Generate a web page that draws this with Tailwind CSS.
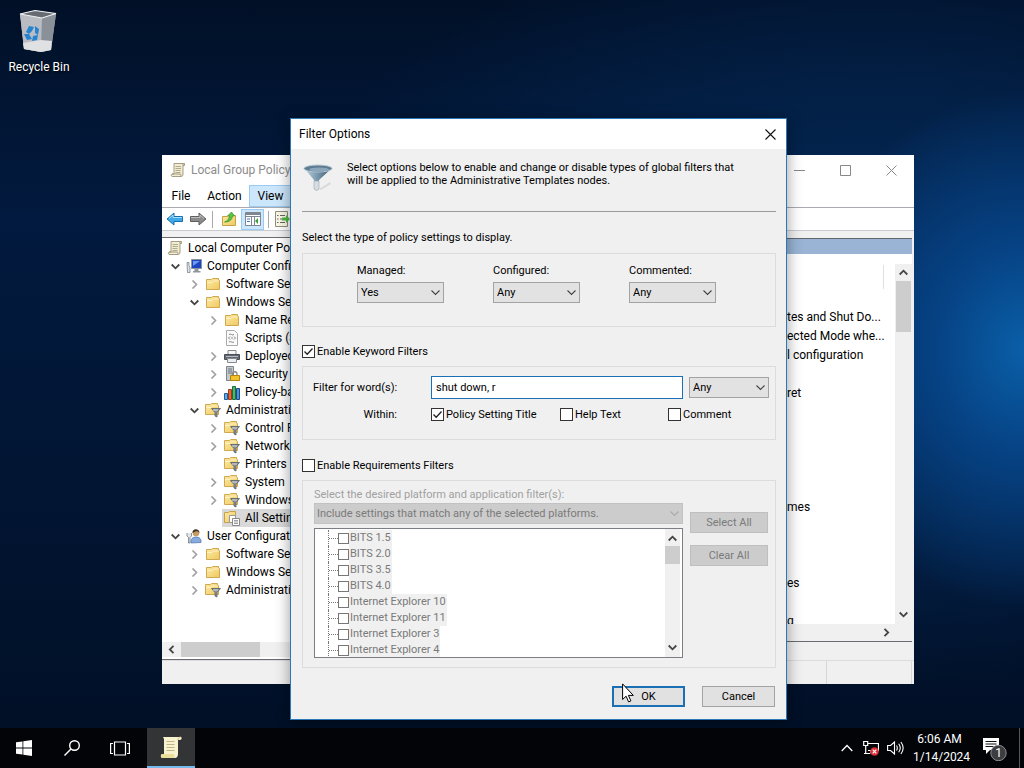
<!DOCTYPE html>
<html lang="en">
<head>
<meta charset="utf-8">
<meta name="viewport" content="width=device-width, initial-scale=1">
<title>Filter Options</title>
<script src="https://cdn.jsdelivr.net/npm/@tailwindcss/browser@4"></script>
</head>
<body class="h-screen overflow-hidden bg-[#011334] font-['Roboto',sans-serif] text-[12px] leading-[18px] text-black">

<!-- shared icons -->
<svg class="absolute size-0" aria-hidden="true">
  <linearGradient id="gold" x1="0" y1="0" x2="1" y2="1"><stop offset="0" stop-color="#fdeaa8"/><stop offset="1" stop-color="#efc95e"/></linearGradient>
  <linearGradient id="steel" x1="0" y1="0" x2="1" y2="0"><stop offset="0" stop-color="#c3d6e2"/><stop offset=".45" stop-color="#7b9bb0"/><stop offset="1" stop-color="#3d566b"/></linearGradient>
  <symbol id="right" viewBox="0 0 9 9"><path d="M2.500.5 6.500 4.500 2.500 8.500" fill="none" stroke="#a0a0a0" stroke-width="1.600"/></symbol>
  <symbol id="down" viewBox="0 0 9 9"><path d="M.7 2.500 4.500 6.300 8.300 2.500" fill="none" stroke="#444" stroke-width="1.800"/></symbol>
  <symbol id="folder" viewBox="0 0 16 16"><path d="M1.500 3.500h5l1-1h6v2h1v9h-13z" fill="url(#gold)" stroke="#d0a850"/><path d="M2 6.500h5l1.500-1.500h5.500" fill="none" stroke="#fff3c4"/></symbol>
  <symbol id="filterfolder" viewBox="0 0 16 16"><path d="M.5 2.500h5l1-1h6v2h1v9h-13z" fill="url(#gold)" stroke="#d0a850"/><path d="M1 5.500h5l1.500-1.500h5.500" fill="none" stroke="#fff3c4"/><path d="M6.500 6.500h9l-3.500 4v4.500l-2-1v-3.500z" fill="#8c959b" stroke="#555e64" stroke-width=".8"/><path d="M8 8h5" stroke="#d5dadd"/></symbol>
  <symbol id="scroll" viewBox="0 0 16 16"><path d="M4 1.500h10.500v2H13v8.500c0 1.500-.5 2.500-2 2.500H2c-1-.5-1-2 0-2.500h2z" fill="#f1ecd2" stroke="#9b9478" stroke-width=".9"/><path d="M13 3.500V1.500M2 12h8.500c.5 1 .5 2 0 2.500" fill="none" stroke="#9b9478" stroke-width=".9"/><path d="M5.500 4.500h5.500M5.500 6.500h5.500M5.500 8.500h5M5.500 10.500h5" stroke="#a9a384" stroke-width=".9"/></symbol>
  <symbol id="chev" viewBox="0 0 9 9"><path d="M.5 2.500 4.500 6.500 8.500 2.500" fill="none" stroke="currentColor" stroke-width="1.100"/></symbol>
  <symbol id="tick" viewBox="0 0 13 13"><path d="M2.500 6.500 5.200 9.300 10.500 3.500" fill="none" stroke="#222" stroke-width="1.300"/></symbol>
</svg>

<div class="relative flex h-full flex-col">

  <!-- wallpaper and desktop -->
  <main class="relative min-h-0 flex-1 overflow-hidden bg-[radial-gradient(ellipse_220px_260px_at_100%_48%,#0a5fa8_0%,#064284_40%,transparent_100%),radial-gradient(ellipse_620px_380px_at_85%_42%,#042c5e_0%,#032148_50%,transparent_100%),linear-gradient(180deg,#011027,#021a3f_30%,#011027)]">
    <div class="flex w-[78px] flex-col items-center gap-1 pt-2 text-white">
      <svg class="h-[46px] w-[42px]" viewBox="0 0 42 46" role="img" aria-label="Recycle Bin">
        <path d="M2 6 17 2.500 38 5.500 33 42 23 44 6 41z" fill="#aaafb5"/>
        <path d="M2 6 24 10 23 44 6 41z" fill="#b9bdc3"/>
        <path d="M24 10 38 5.500 33 42 23 44z" fill="#8a9098"/>
        <path d="M5 35 23 32 34 33 33 42 23 44 6 41z" fill="#dfe1e3"/>
        <path d="M2 6 17 2.500 38 5.500 24 10z" fill="#666b71" stroke="#eef0f1" stroke-width="1.200"/>
        <path d="M8 24l3-6 5 1-2 4-3 3zM17 18l4 3-1 6-3-2zM6 26l5 0 3 5-5 1zM15 28l5-1-1 5-5 1z" fill="#2583cf"/>
      </svg>
      <span class="[text-shadow:1px_1px_2px_#000]">Recycle Bin</span>
    </div>

    <!-- Local Group Policy Editor -->
    <section class="absolute top-[155px] left-[162px] flex h-[529px] w-[752px] flex-col bg-[#f0f0f0]" aria-label="Local Group Policy Editor">
      <header class="flex h-[30px] items-center bg-white pl-2 text-[#8c8c8c]">
        <svg class="mr-[5px] size-4"><use href="#scroll"/></svg>
        <h1 class="flex-1">Local Group Policy Editor</h1>
        <button class="grid h-full w-[46px] place-items-center" aria-label="Minimize"><svg class="size-[11px]" viewBox="0 0 11 11"><path d="M0 5.500h11" stroke="#888"/></svg></button>
        <button class="grid h-full w-[46px] place-items-center" aria-label="Maximize"><svg class="size-[11px]" viewBox="0 0 11 11"><path d="M.5.5h10v10H.5z" fill="none" stroke="#888"/></svg></button>
        <button class="grid h-full w-[46px] place-items-center" aria-label="Close"><svg class="size-[11px]" viewBox="0 0 11 11"><path d="m.5.5 10 10m0-10-10 10" stroke="#888"/></svg></button>
      </header>
      <nav class="flex h-[23px] items-stretch border-b border-[#a9abb0] bg-white">
        <button class="w-[38px]">File</button>
        <button class="w-[49px]">Action</button>
        <button class="w-[43px] border border-[#99cbf5] bg-[#cce6fb]">View</button>
        <button class="px-2">Help</button>
      </nav>
      <div class="flex h-[23px] shrink-0 items-center border-b border-[#c8cbd0] bg-white pl-1">
        <button aria-label="Back"><svg class="h-4 w-[18px]" viewBox="0 0 18 16"><path d="M1 8 8 2v3.500h8.500v5H8V14z" fill="#3fa9e8" stroke="#1c6fae"/><path d="M3 7.500 7 4v2.500h9" fill="none" stroke="#a9defc"/></svg></button>
        <button class="ml-[5px]" aria-label="Forward"><svg class="h-4 w-[18px]" viewBox="0 0 18 16"><path d="M17 8 10 2v3.500H1.500v5H10V14z" fill="#8b8b8b" stroke="#5f5f5f"/><path d="M2 6.500h9V4l4 3.500" fill="none" stroke="#bdbdbd"/></svg></button>
        <span class="ml-[5px] h-[17px] w-px bg-[#a9a9a9]"></span>
        <button class="ml-2" aria-label="Up"><svg class="size-4" viewBox="0 0 16 16"><path d="M1.500 5.500h5l1-1h7v10h-13z" fill="url(#gold)" stroke="#c9a04a"/><path d="M3.500 11c3-1 4.500-3 5-6H6.500L10.500 1l3 4h-2c-.5 4-3 6-8 6z" fill="#5cc244" stroke="#35942a" stroke-width=".7"/></svg></button>
        <button class="ml-1 grid h-[21px] w-[23px] place-items-center border border-[#99cbf5] bg-[#cce6fb]" aria-label="Show tree"><svg class="size-4" viewBox="0 0 16 16"><path d="M.5 1.500h15v13H.5z" fill="#fff" stroke="#7d8894"/><path d="M1 2h14v2H1z" fill="#7d8894"/><path d="M1 5.500h14M6.500 6v8.500M9.500 6v8" stroke="#7d8894"/><path d="M2 8h3M2 10.500h3" stroke="#4979b8"/><path d="M13 7v6L10 10z" fill="#3ba334"/></svg></button>
        <span class="ml-1 h-[17px] w-px bg-[#a9a9a9]"></span>
        <button class="ml-[5px]" aria-label="Export list"><svg class="size-4" viewBox="0 0 16 16"><path d="M1.500.5h12v15h-12z" fill="#fbf8e6" stroke="#8f8f7c"/><path d="M3 4.500h1.500M3 8h1.500M3 11.500h1.500M6 4.500h5M6 8h3M6 11.500h5" stroke="#666"/><path d="M8 6.500h4V4l4 4-4 4V9.500H8z" fill="#4fb944"/></svg></button>
      </div>

      <div class="flex min-h-0 flex-1 justify-between">
        <div class="mt-[6px] flex w-[300px] flex-col border-y border-[#696b70] bg-white pb-[2px]">
          <ul class="flex-1 overflow-hidden pt-[1px] whitespace-nowrap [&_b]:mr-[5px] [&_b]:size-4 [&_b]:shrink-0 [&_button]:mr-[2px] [&_button]:grid [&_button]:h-[18px] [&_button]:w-[17px] [&_button]:shrink-0 [&_button]:place-items-center [&_button_svg]:size-[9px] [&_div]:flex [&_div]:h-[18px] [&_div]:items-center">
            <li><div class="pl-[5px]"><b><svg class="size-4"><use href="#scroll"/></svg></b>Local Computer Policy</div>
              <ul class="pl-[5px]">
                <li><div><button aria-label="Collapse"><svg><use href="#down"/></svg></button><b><svg class="size-4" viewBox="0 0 16 16"><path d="M5.500 1.500h10v9h-10z" fill="#1c45c4" stroke="#8b939d"/><path d="M7 3h7L7 8z" fill="#6d9af0"/><path d="M8.500 11h4v2h2v1.500H7V13h1.500z" fill="#8f979f"/><path d="M1 4.500h2v3l1 2v5H1.500z" fill="#dbe2ea" stroke="#6c7681" stroke-width=".7"/></svg></b>Computer Configuration</div>
                  <ul class="pl-[19px]">
                    <li><div><button aria-label="Expand"><svg><use href="#right"/></svg></button><b><svg class="size-4"><use href="#folder"/></svg></b>Software Settings</div></li>
                    <li><div><button aria-label="Collapse"><svg><use href="#down"/></svg></button><b><svg class="size-4"><use href="#folder"/></svg></b>Windows Settings</div>
                      <ul class="pl-[19px]">
                        <li><div><button aria-label="Expand"><svg><use href="#right"/></svg></button><b><svg class="size-4"><use href="#folder"/></svg></b>Name Resolution Policy</div></li>
                        <li><div class="pl-[19px]"><b><svg class="size-4" viewBox="0 0 16 16"><path d="M2.500.5h8l3 3v12h-11z" fill="#fafafa" stroke="#aaa"/><path d="M5 4.500c2-1.500 3 1.500 5 0M4.500 8 6 6.500M4.500 8 6 9.500M11.500 8 10 6.500M11.500 8 10 9.500M7 8h2M5 12c2-1.500 3 1.500 5 0" fill="none" stroke="#777" stroke-width=".9"/></svg></b>Scripts (Startup/Shutdown)</div></li>
                        <li><div><button aria-label="Expand"><svg><use href="#right"/></svg></button><b><svg class="size-4" viewBox="0 0 16 16"><path d="M4 2.500h8v4H4z" fill="#f5f5f5" stroke="#888"/><path d="M.5 6.500h15v5H.5z" fill="#626870" stroke="#4a4e54"/><path d="M2 8.500h12" stroke="#b5bac0"/><path d="M3.500 10.500h9v4h-9z" fill="#e9eef2" stroke="#888"/></svg></b>Deployed Printers</div></li>
                        <li><div><button aria-label="Expand"><svg><use href="#right"/></svg></button><b><svg class="size-4" viewBox="0 0 16 16"><path d="M2.500.5h7v14h-7z" fill="#c3c9ce" stroke="#7d858c"/><path d="M4 3h4M4 5h4M4 7h4" stroke="#6c747b"/><path d="M8.500 10V8c0-3 4.500-3 4.500 0v2" fill="none" stroke="#8b8b8b" stroke-width="1.300"/><path d="M6.500 9.500h9v5h-9z" fill="#f2c12e" stroke="#b3870d"/></svg></b>Security Settings</div></li>
                        <li><div><button aria-label="Expand"><svg><use href="#right"/></svg></button><b><svg class="size-4" viewBox="0 0 16 16"><path d="M.5 9.500h3v6h-3z" fill="#69abea" stroke="#245d96"/><path d="M4.500 5.500h3v10h-3z" fill="#e8663a" stroke="#963b1b"/><path d="M8.500 2.500h3v13h-3z" fill="#53b36a" stroke="#1c6d38"/><path d="M12.500 4.500h3v11h-3z" fill="#4c8fdd" stroke="#1b4a85"/></svg></b>Policy-based QoS</div></li>
                      </ul>
                    </li>
                    <li><div><button aria-label="Collapse"><svg><use href="#down"/></svg></button><b><svg class="size-4"><use href="#filterfolder"/></svg></b>Administrative Templates</div>
                      <ul class="pl-[19px]">
                        <li><div><button aria-label="Expand"><svg><use href="#right"/></svg></button><b><svg class="size-4"><use href="#filterfolder"/></svg></b>Control Panel</div></li>
                        <li><div><button aria-label="Expand"><svg><use href="#right"/></svg></button><b><svg class="size-4"><use href="#filterfolder"/></svg></b>Network</div></li>
                        <li><div class="pl-[19px]"><b><svg class="size-4"><use href="#filterfolder"/></svg></b>Printers</div></li>
                        <li><div><button aria-label="Expand"><svg><use href="#right"/></svg></button><b><svg class="size-4"><use href="#filterfolder"/></svg></b>System</div></li>
                        <li><div><button aria-label="Expand"><svg><use href="#right"/></svg></button><b><svg class="size-4"><use href="#filterfolder"/></svg></b>Windows Components</div></li>
                        <li><div class="ml-[17px] bg-[#d9d9d9] pl-[2px]"><b><svg class="size-4" viewBox="0 0 16 16"><path d="M.5 2.500h4l1-1h6v11H.5z" fill="url(#gold)" stroke="#c9a04a"/><path d="M5.500 5.500h6v7h-6z" fill="#fff" stroke="#999"/><path d="M8.500 8.500h7v7h-7z" fill="#fff" stroke="#888"/><path d="M10 10.500h4M10 12h4M10 13.500h4" stroke="#777" stroke-width=".7"/></svg></b>All Settings</div></li>
                      </ul>
                    </li>
                  </ul>
                </li>
                <li><div><button aria-label="Collapse"><svg><use href="#down"/></svg></button><b><svg class="size-4" viewBox="0 0 16 16"><path d="M5 15c-.5-4 1.500-6 5-6s5.500 2 5 5.500z" fill="#87acdf" stroke="#4a6fa8" stroke-width=".7"/><circle cx="10" cy="5" r="3.300" fill="#c79b62"/><path d="M6.500 5c-.5-5 7-5 7 0-1-2-4-2.500-5-1z" fill="#3f3427"/><path d="M1 5v3l1.500 1.500V15H4V9.500L5.500 8V5" fill="#e3e8ed" stroke="#717a84" stroke-width=".8"/></svg></b>User Configuration</div>
                  <ul class="pl-[19px]">
                    <li><div><button aria-label="Expand"><svg><use href="#right"/></svg></button><b><svg class="size-4"><use href="#folder"/></svg></b>Software Settings</div></li>
                    <li><div><button aria-label="Expand"><svg><use href="#right"/></svg></button><b><svg class="size-4"><use href="#folder"/></svg></b>Windows Settings</div></li>
                    <li><div><button aria-label="Expand"><svg><use href="#right"/></svg></button><b><svg class="size-4"><use href="#filterfolder"/></svg></b>Administrative Templates</div></li>
                  </ul>
                </li>
              </ul>
            </li>
          </ul>
          <div class="flex h-[15px] items-center bg-[#f0f0f0]">
            <svg class="mx-[5px] size-[9px]" viewBox="0 0 9 9"><path d="M6.500.8 2.800 4.500 6.500 8.200" fill="none" stroke="#444" stroke-width="1.800"/></svg>
            <span class="h-full w-[79px] bg-[#cdcdcd]"></span>
          </div>
        </div>

        <div class="mt-[7px] mr-[2px] flex w-[430px] flex-col">
          <div class="h-4 border-t border-[#62676d] bg-[#99b4d4]"></div>
          <div class="flex min-h-0 flex-1 bg-white">
            <div class="flex min-w-0 flex-1 flex-col">
              <div class="mt-[11px] mr-[11px] h-6 border-r border-[#e0e0e0]"></div>
              <ul class="ml-[305px] flex-1 overflow-hidden pt-[19px] whitespace-nowrap [&>li]:h-[19px]">
                <li>tes and Shut Do...</li><li>ected Mode whe...</li><li>l configuration</li><li></li><li>ret</li><li></li><li></li><li></li><li></li><li></li><li>mes</li><li></li><li></li><li></li><li>es</li><li></li><li>g</li>
              </ul>
              <div class="flex h-[17px] items-center justify-end bg-[#f0f0f0] pr-1">
                <svg class="size-[9px]" viewBox="0 0 9 9"><path d="M2.500.8 6.200 4.500 2.500 8.200" fill="none" stroke="#444" stroke-width="1.800"/></svg>
              </div>
            </div>
            <div class="mt-[10px] flex w-[17px] flex-col items-center bg-[#f0f0f0] pb-[18px]">
              <svg class="my-1 size-[9px]" viewBox="0 0 9 9"><path d="M.7 6.500 4.500 2.700 8.300 6.500" fill="none" stroke="#444" stroke-width="1.800"/></svg>
              <span class="h-[51px] w-[15px] bg-[#cdcdcd]"></span>
              <svg class="mt-auto mb-1 size-[9px]"><use href="#down"/></svg>
            </div>
          </div>
          <div class="h-[19px] border-t border-[#696b70]"></div>
        </div>
      </div>
      <footer class="flex h-[24px] shrink-0 justify-end border-t border-[#dcdcdc] pr-[2px]"><span class="w-[86px] border-x border-[#d7d7d7]"></span></footer>
    </section>

    <!-- Filter Options -->
    <form class="absolute top-[118px] left-[290px] flex w-[497px] flex-col border border-[#2b78b8] bg-[#f0f0f0] pr-[10px] pb-3 pl-[11px] text-[11px] leading-[13px] shadow-[0_2px_14px_rgba(0,0,0,0.4)]" role="dialog" aria-label="Filter Options">
      <header class="-mr-[10px] -ml-[11px] flex h-[30px] items-center justify-between bg-white pl-2 text-[12px]">
        <h2>Filter Options</h2>
        <button type="button" class="grid h-full w-[31px] place-items-center" aria-label="Close"><svg class="size-[11px]" viewBox="0 0 11 11"><path d="m.5.5 10 10m0-10-10 10" stroke="#111" stroke-width="1.100"/></svg></button>
      </header>

      <div class="flex h-[63px] gap-[13px] border-b border-[#9a9a9a] pt-3">
        <svg class="mt-[2px] h-[30px] w-8" viewBox="0 0 32 30"><path d="M17 26l11-7 1 2-10 6z" fill="#dadada"/><path d="M2 5 12 17v8c0 3 5 3 5 0v-8L30 5z" fill="url(#steel)"/><path d="M12 18v7c0 3 5 3 5 0v-7z" fill="#d5dde2" stroke="#9aa7b0" stroke-width=".6"/><ellipse cx="16" cy="5.500" rx="14" ry="3.500" fill="#5d7a90" stroke="#b8cad5"/><ellipse cx="17" cy="6.500" rx="10" ry="2" fill="#8ba6b8"/></svg>
        <p class="flex-1 whitespace-nowrap">Select options below to enable and change or disable types of global filters that<br>will be applied to the Administrative Templates nodes.</p>
      </div>
      <p class="mt-[19px]">Select the type of policy settings to display.</p>

      <fieldset class="mt-[9px] flex h-[74px] gap-[49px] border border-[#dcdcdc] pt-[10px] pl-[54px] [&>label]:flex [&>label]:w-[87px] [&>label]:flex-col [&>label]:gap-[5px]">
        <label>Managed:
          <span class="grid"><select class="col-start-1 row-start-1 h-[21px] appearance-none border border-[#a3a3a3] bg-[#e2e2e2] px-[3px]"><option>Yes</option><option>Any</option></select><svg class="pointer-events-none col-start-1 row-start-1 mr-1 size-[9px] self-center justify-self-end text-[#444]"><use href="#chev"/></svg></span>
        </label>
        <label>Configured:
          <span class="grid"><select class="col-start-1 row-start-1 h-[21px] appearance-none border border-[#a3a3a3] bg-[#e2e2e2] px-[3px]"><option>Any</option></select><svg class="pointer-events-none col-start-1 row-start-1 mr-1 size-[9px] self-center justify-self-end text-[#444]"><use href="#chev"/></svg></span>
        </label>
        <label>Commented:
          <span class="grid"><select class="col-start-1 row-start-1 h-[21px] appearance-none border border-[#a3a3a3] bg-[#e2e2e2] px-[3px]"><option>Any</option></select><svg class="pointer-events-none col-start-1 row-start-1 mr-1 size-[9px] self-center justify-self-end text-[#444]"><use href="#chev"/></svg></span>
        </label>
      </fieldset>

      <label class="mt-[18px] flex items-center gap-[2px]"><span class="grid"><input type="checkbox" checked class="peer col-start-1 row-start-1 size-[13px] appearance-none border border-[#333] bg-white"><svg class="pointer-events-none col-start-1 row-start-1 hidden size-[13px] peer-checked:block"><use href="#tick"/></svg></span>Enable Keyword Filters</label>

      <fieldset class="mt-2 grid h-[74px] grid-cols-[118px_1fr] content-start gap-y-[9px] border border-[#dcdcdc] pt-[9px] pr-[6px] pl-[10px]">
        <label for="words" class="self-center">Filter for word(s):</label>
        <div class="flex items-center gap-[6px]">
          <input id="words" type="text" value="shut down, r" class="h-[23px] w-[252px] border border-[#1a6fb5] bg-white px-1">
          <span class="grid flex-1"><select aria-label="Match" class="col-start-1 row-start-1 h-[21px] appearance-none border border-[#a3a3a3] bg-[#e2e2e2] px-[3px]"><option>Any</option></select><svg class="pointer-events-none col-start-1 row-start-1 mr-1 size-[9px] self-center justify-self-end text-[#444]"><use href="#chev"/></svg></span>
        </div>
        <span class="pr-[34px] text-right">Within:</span>
        <div class="flex [&>label]:flex [&>label]:items-center [&>label]:gap-[2px]">
          <label class="w-[129px]"><span class="grid"><input type="checkbox" checked class="peer col-start-1 row-start-1 size-[13px] appearance-none border border-[#333] bg-white"><svg class="pointer-events-none col-start-1 row-start-1 hidden size-[13px] peer-checked:block"><use href="#tick"/></svg></span>Policy Setting Title</label>
          <label class="w-[108px]"><input type="checkbox" class="size-[13px] appearance-none border border-[#333] bg-white">Help Text</label>
          <label><input type="checkbox" class="size-[13px] appearance-none border border-[#333] bg-white">Comment</label>
        </div>
      </fieldset>

      <label class="mt-[19px] flex items-center gap-[2px]"><input type="checkbox" class="size-[13px] appearance-none border border-[#333] bg-white">Enable Requirements Filters</label>

      <fieldset disabled class="mt-2 flex h-[188px] gap-[7px] border border-[#dcdcdc] pt-[7px] pr-[7px] pl-[11px] text-[#7a7a7a]">
        <div class="w-[369px]">
          <label for="platform" class="block text-[#a0a0a0]">Select the desired platform and application filter(s):</label>
          <span class="mt-[2px] grid"><select id="platform" class="col-start-1 row-start-1 h-[21px] appearance-none border border-[#c2c2c2] bg-[#cccccc] px-[2px] opacity-100"><option>Include settings that match any of the selected platforms.</option></select><svg class="pointer-events-none col-start-1 row-start-1 mr-1 size-[9px] self-center justify-self-end text-[#aaa]"><use href="#chev"/></svg></span>
          <div class="mt-1 flex h-[130px] justify-between overflow-hidden border border-[#7b7f85] bg-white">
            <ul class="mt-[1px] ml-[13px] [&_i]:w-[9px] [&_i]:border-t [&_i]:border-dotted [&_i]:border-[#777] [&_input]:size-[11px] [&_input]:appearance-none [&_input]:border [&_input]:border-[#777] [&_label]:flex [&_label]:h-4 [&_label]:items-center [&_li]:border-l [&_li]:border-dotted [&_li]:border-[#777] [&_span]:bg-[#f0f0f0] [&_span]:px-px [&_span]:leading-4 [&_span]:whitespace-nowrap">
              <li><label><i></i><input type="checkbox"><span>BITS 1.5</span></label></li>
              <li><label><i></i><input type="checkbox"><span>BITS 2.0</span></label></li>
              <li><label><i></i><input type="checkbox"><span>BITS 3.5</span></label></li>
              <li><label><i></i><input type="checkbox"><span>BITS 4.0</span></label></li>
              <li><label><i></i><input type="checkbox"><span>Internet Explorer 10</span></label></li>
              <li><label><i></i><input type="checkbox"><span>Internet Explorer 11</span></label></li>
              <li><label><i></i><input type="checkbox"><span>Internet Explorer 3</span></label></li>
              <li><label><i></i><input type="checkbox"><span>Internet Explorer 4</span></label></li>
            </ul>
            <div class="mr-[2px] flex w-[15px] flex-col items-center bg-[#f0f0f0]">
              <svg class="mt-[5px] mb-[3px] size-[9px]" viewBox="0 0 9 9"><path d="M.7 6.500 4.500 2.700 8.300 6.500" fill="none" stroke="#444" stroke-width="1.800"/></svg>
              <span class="h-[18px] w-full bg-[#cdcdcd]"></span>
              <svg class="mt-auto mb-[5px] size-[9px]"><use href="#down"/></svg>
            </div>
          </div>
        </div>
        <div class="flex flex-1 flex-col gap-3 pt-[24px]">
          <button type="button" class="h-[21px] border border-[#bfbfbf] bg-[#cccccc]">Select All</button>
          <button type="button" class="h-[21px] border border-[#bfbfbf] bg-[#cccccc]">Clear All</button>
        </div>
      </fieldset>

      <div class="mt-[18px] flex justify-end gap-[17px] pr-[1px]">
        <button type="submit" class="h-[21px] w-[73px] border-2 border-[#1a6fb5] bg-[#e1e1e1]">OK</button>
        <button type="button" class="h-[21px] w-[73px] border border-[#a3a3a3] bg-[#e1e1e1]">Cancel</button>
      </div>
    </form>
  </main>

  <!-- taskbar -->
  <footer class="flex h-10 shrink-0 items-center bg-[#020407] text-white">
    <button class="grid h-full w-12 place-items-center" aria-label="Start"><svg class="size-4" viewBox="0 0 16 16" fill="#fff"><path d="M0 2.300 6.500 1.400v6.200H0zM7.300 1.300 16 0v7.600H7.300zM0 8.400h6.500v6.200L0 13.700zM7.300 8.400H16V16l-8.700-1.300z"/></svg></button>
    <button class="grid h-full w-12 place-items-center" aria-label="Search"><svg class="size-4" viewBox="0 0 16 16" fill="none" stroke="#fff" stroke-width="1.400"><circle cx="10.500" cy="5.500" r="4.800"/><path d="M7 9 .5 15.500"/></svg></button>
    <button class="grid h-full w-12 place-items-center" aria-label="Task View"><svg class="h-[15px] w-5" viewBox="0 0 20 15" fill="none" stroke="#fff" stroke-width="1.200"><path d="M4.500 1h11v13h-11zM3 2.500H.6v10H3M17 2.500h2.400v10H17"/></svg></button>
    <button class="ml-[3px] grid h-full w-12 place-items-center border-b-2 border-[#76b9ed] bg-[#333436]" aria-label="Local Group Policy Editor"><svg class="size-6" viewBox="0 0 24 24"><path d="M4 2h18c1 0 1 3-1 3h-2v14c0 2-1 4-3 4H3c-2-1-1-4 0-4h2V4z" fill="#f8f2cf"/><path d="M3 19h12c.5 1.500.5 3 0 4H3c-1.500-1-1.500-3 0-4z" fill="#eadf9c"/><path d="M19 5c0-2 1-3 3-3" fill="none" stroke="#c9bd80"/><path d="M7.500 6.500h8M7.500 9.500h8M7.500 12.500h8M7.500 15.500h8" stroke="#bdb489"/></svg></button>
    <div class="ml-auto flex h-full items-center">
      <button aria-label="Show hidden icons"><svg class="h-2 w-3" viewBox="0 0 12 8"><path d="M.7 7 6 1.500 11.300 7" fill="none" stroke="#fff" stroke-width="1.300"/></svg></button>
      <button class="ml-[10px]" aria-label="Network"><svg class="size-4" viewBox="0 0 16 16"><path d="M5 3.500h10.500v7H5M.7 1.500h4v4h-4zM2.700 5.500v8M1 13.500h6M8 10.500v3" fill="none" stroke="#fff" stroke-width="1.200"/><circle cx="11.500" cy="11.500" r="4.300" fill="#d92c34"/><path d="m9.700 9.700 3.600 3.600m0-3.600-3.600 3.600" stroke="#fff" stroke-width="1.200"/></svg></button>
      <button class="ml-2" aria-label="Volume"><svg class="h-4 w-[17px]" viewBox="0 0 17 16" fill="none" stroke="#fff" stroke-width="1.100"><path d="M.6 5.500h3L7.500 2v12L3.600 10.500h-3zM9.500 5.500c1 1.500 1 3.500 0 5M11.700 3.700c1.900 2.600 1.900 6 0 8.600M13.900 2c2.700 3.600 2.700 8.400 0 12"/></svg></button>
      <div class="ml-[9px] w-[53px] text-center whitespace-nowrap">6:06 AM<br>1/14/2024</div>
      <button class="ml-[16px]" aria-label="Notifications, 1 new"><svg class="h-[26px] w-[26px]" viewBox="0 0 26 26"><path d="M1 3h16v12h-9l-4 4v-4H1z" fill="#fff"/><path d="M3.500 6.500h11M3.500 9h11M3.500 11.500h8" stroke="#111"/><circle cx="16.500" cy="18" r="7.700" fill="#3b3d40" stroke="#8a8c8f"/><text x="16.500" y="22" fill="#fff" font-size="12" text-anchor="middle">1</text></svg></button>
      <span class="mr-1 ml-[11px] h-full w-px bg-[#55585c]"></span>
    </div>
  </footer>

  <!-- pointer -->
  <svg class="pointer-events-none absolute top-[683px] left-[622px] h-5 w-3" viewBox="0 0 12 20"><path d="M.6.900v15.600l3.500-3.300 2.500 5.700 2.300-1-2.500-5.500h4.900z" fill="#fff" stroke="#000"/></svg>
</div>
</body>
</html>
